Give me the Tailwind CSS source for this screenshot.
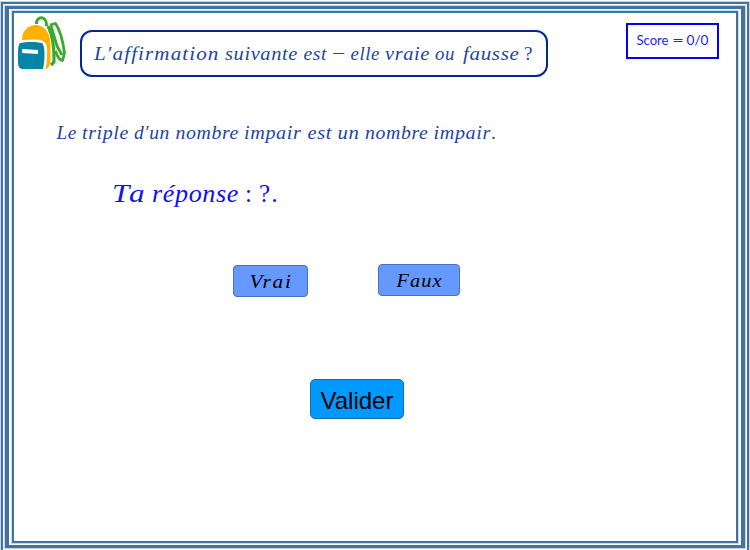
<!DOCTYPE html>
<html lang="fr">
<head>
<meta charset="utf-8">
<title>Vrai ou faux</title>
<script src="https://cdn.jsdelivr.net/npm/@tailwindcss/browser@4"></script>
</head>
<body class="h-[550px] w-[750px] overflow-hidden bg-white">
<div class="h-[560px] w-[750px] pt-[2px] pl-px pr-px">
<div class="h-[552px] border-2 border-[#44729f] px-[2px] pt-[2px] outline outline-[#c5d8ea]">
<div class="h-[542px] border-x-4 border-t-[3px] border-b-[3px] border-[#4273a0] px-[3px] pt-[2px] pb-[2px] outline outline-[#c5d8ea]">
<div class="h-full border-2 border-[#44729f] outline outline-[#c5d8ea]">
<main class="flex h-full flex-col">
  <header class="flex h-[74px] items-start">
    <svg class="mt-[2px] ml-[3px] h-[56px] w-[52px] shrink-0" viewBox="17 15 52 56" fill="none" stroke-linejoin="round">
      <path d="M36.500 24C36 15.500 47 15 46.500 26" stroke="#3aaa2a" stroke-width="3"/>
      <path d="M48 26C52 34 54.500 44 54 62L51 65" stroke="#3aaa2a" stroke-width="3.200"/>
      <path d="M50 25L55.500 23.500C60 30 63 42 64.500 53L62.500 60.500C60 60 57 56 55.500 51M51 26L57 46L62 55" stroke="#3aaa2a" stroke-width="2.800"/>
      <path d="M22 40C22 29 30 24.500 37 25C48 26.500 50.500 37 50.500 46V58C50.500 65 48.500 69 45.500 69C47 64 47 58 47 48C46 40 40 39.500 34 39.500Z" fill="#ffb000"/>
      <path d="M20 43C26 41.500 37 41.500 42 43C45.500 46 45 62 43 69H22C17.500 68.500 18 63 18 57C18 51 18 45 20 43Z" fill="#0585a5"/>
      <path d="M22 49L38 50V54L22 53Z" fill="#fff"/>
    </svg>
    <h1 class="mt-[17px] ml-[11px] h-[47px] w-[468px] rounded-[12px] border-2 border-[#002699]">
      <svg class="block h-[43px] w-[464px]" viewBox="83 32 464 43" fill="#1d45a5" font-family="Liberation Serif, serif" font-style="italic" font-size="19" letter-spacing="0.6">
        <text x="95" y="60" textLength="125.5" lengthAdjust="spacingAndGlyphs" letter-spacing="1">L′affirmation</text><text x="226" y="60" textLength="73" lengthAdjust="spacingAndGlyphs">suivante</text><text x="304.5" y="60" textLength="23.500" lengthAdjust="spacingAndGlyphs">est</text><text x="333" y="60" font-style="normal" textLength="14" lengthAdjust="spacingAndGlyphs">−</text><text x="351.5" y="60" textLength="29.500" lengthAdjust="spacingAndGlyphs">elle</text><text x="386" y="60" textLength="45" lengthAdjust="spacingAndGlyphs">vraie</text><text x="436" y="60" textLength="20" lengthAdjust="spacingAndGlyphs">ou</text><text x="464" y="60" textLength="56.500" lengthAdjust="spacingAndGlyphs">fausse</text><text x="525" y="60" font-style="normal">?</text>
      </svg>
    </h1>
    <div class="mt-[10px] ml-[78px] h-[36px] w-[93px] shrink-0 border-2 border-[#0000ff]">
      <svg class="block h-[32px] w-[89px]" viewBox="628 25 89 32" fill="#2222ff" font-family="Lato, sans-serif" font-size="14">
        <text x="636.5" y="45" textLength="32" lengthAdjust="spacingAndGlyphs">Score</text><text x="672" y="45" textLength="12" lengthAdjust="spacingAndGlyphs">=</text><text x="686.5" y="45" textLength="22" lengthAdjust="spacingAndGlyphs">0/0</text>
      </svg>
    </div>
  </header>
  <p class="mt-[28px]">
    <svg class="ml-[36px] block h-[35px] w-[460px]" viewBox="50 115 460 35" fill="#1d45a5" font-family="Liberation Serif, serif" font-style="italic" font-size="19" letter-spacing="0.6">
      <text x="56.5" y="139" textLength="20.500" lengthAdjust="spacingAndGlyphs">Le</text><text x="82" y="139" textLength="47" lengthAdjust="spacingAndGlyphs">triple</text><text x="134" y="139" textLength="36" lengthAdjust="spacingAndGlyphs">d′un</text><text x="175.5" y="139" textLength="63.500" lengthAdjust="spacingAndGlyphs">nombre</text><text x="244" y="139" textLength="57.500" lengthAdjust="spacingAndGlyphs">impair</text><text x="307.5" y="139" textLength="24.500" lengthAdjust="spacingAndGlyphs">est</text><text x="337.5" y="139" textLength="22" lengthAdjust="spacingAndGlyphs">un</text><text x="365" y="139" textLength="63.500" lengthAdjust="spacingAndGlyphs">nombre</text><text x="433.5" y="139" textLength="57.500" lengthAdjust="spacingAndGlyphs">impair</text><text x="491.5" y="139">.</text>
    </svg>
  </p>
  <p class="mt-[25px]">
    <svg class="ml-[86px] block h-[40px] w-[190px]" viewBox="100 175 190 40" fill="#0d0dff" font-family="Liberation Serif, serif" font-style="italic" font-size="25" letter-spacing="0.6">
      <text x="112" y="202" textLength="35" lengthAdjust="spacingAndGlyphs" letter-spacing="2">Ta</text><text x="152" y="202" textLength="87" lengthAdjust="spacingAndGlyphs">réponse</text><text x="245" y="202" font-style="normal">:</text><text x="259" y="202" font-style="normal">?</text><text x="272" y="202">.</text>
    </svg>
  </p>
  <div class="mt-[49px] ml-[219px] flex items-start">
    <button class="mt-px h-[32px] w-[75px] rounded-[4px] border border-[#4571bc] bg-[#6699ff]">
      <svg class="block h-[30px] w-[73px]" viewBox="234 266 73 30" font-family="Liberation Serif, serif" font-style="italic" font-size="19">
        <text x="249.5" y="287.5" textLength="43" lengthAdjust="spacingAndGlyphs" letter-spacing="1.5">Vrai</text>
      </svg>
    </button>
    <button class="ml-[70px] h-[32px] w-[82px] rounded-[4px] border border-[#4571bc] bg-[#6699ff]">
      <svg class="block h-[30px] w-[80px]" viewBox="379 265 80 30" font-family="Liberation Serif, serif" font-style="italic" font-size="19">
        <text x="396.5" y="286.5" textLength="46" lengthAdjust="spacingAndGlyphs" letter-spacing="1">Faux</text>
      </svg>
    </button>
  </div>
  <button class="mt-[82px] ml-[296px] h-[40px] w-[94px] rounded-[5px] border border-[#1768ad] bg-[#0099ff] pt-[3px] font-['Liberation_Sans',sans-serif] text-[24px] leading-[35px] text-black">Valider</button>
</main>
</div>
</div>
</div>
</div>
</body>
</html>
